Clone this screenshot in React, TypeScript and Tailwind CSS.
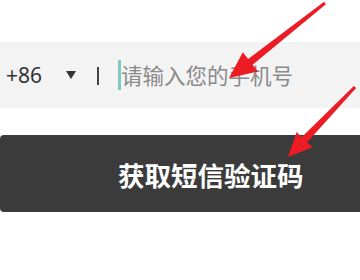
export default function App() {
  return (
    <div
      className="relative h-[280px] w-[360px] overflow-hidden bg-white pt-[42px]"
      style={{ fontFamily: '"Noto Sans", "Noto Sans CJK SC", sans-serif' }}
    >
      <div className="flex h-[66px] items-center bg-[#f3f3f3] pl-[6px]">
        <span className="text-[21px] leading-none text-[#333]">+86</span>
        <svg width="10" height="8" viewBox="0 0 10 8" className="ml-[24px]">
          <path d="M0 0 H10 L5 8 Z" fill="#333" />
        </svg>
        <div className="ml-[21px] mt-[1px] h-[18px] w-[2px] bg-[#444]" />
        <div className="ml-[19px] h-[30px] w-[3px] bg-[#7fc9c3]" />
        <span
          className="text-[21.5px] leading-none text-[#8a8a8a]"
          style={{ fontFamily: '"Noto Sans CJK SC", sans-serif' }}
        >
          请输入您的手机号
        </span>
      </div>

      <div className="mt-[27px] flex h-[77px] items-center rounded-l-[4px] bg-[#3b3b3b] pl-[118px]">
        <span
          className="pt-[4px] text-[26.5px] font-bold leading-none text-white"
          style={{ fontFamily: '"Noto Sans CJK SC", sans-serif' }}
        >
          获取短信验证码
        </span>
      </div>

      {/* annotation arrows */}
      <svg
        className="pointer-events-none absolute left-0 top-0"
        width="360"
        height="280"
        viewBox="0 0 360 280"
      >
        <polygon
          points="325.9,4.2 252.6,64.7 258.0,71.5 229,78 242.8,52.3 248.2,59.1 324.1,1.8"
          fill="#ec1c24"
        />
        <polygon
          points="356.1,88.1 307.2,142.2 312.5,147.3 288,157 296.7,132.1 301.6,137.2 353.9,85.9"
          fill="#ec1c24"
        />
      </svg>
    </div>
  );
}
